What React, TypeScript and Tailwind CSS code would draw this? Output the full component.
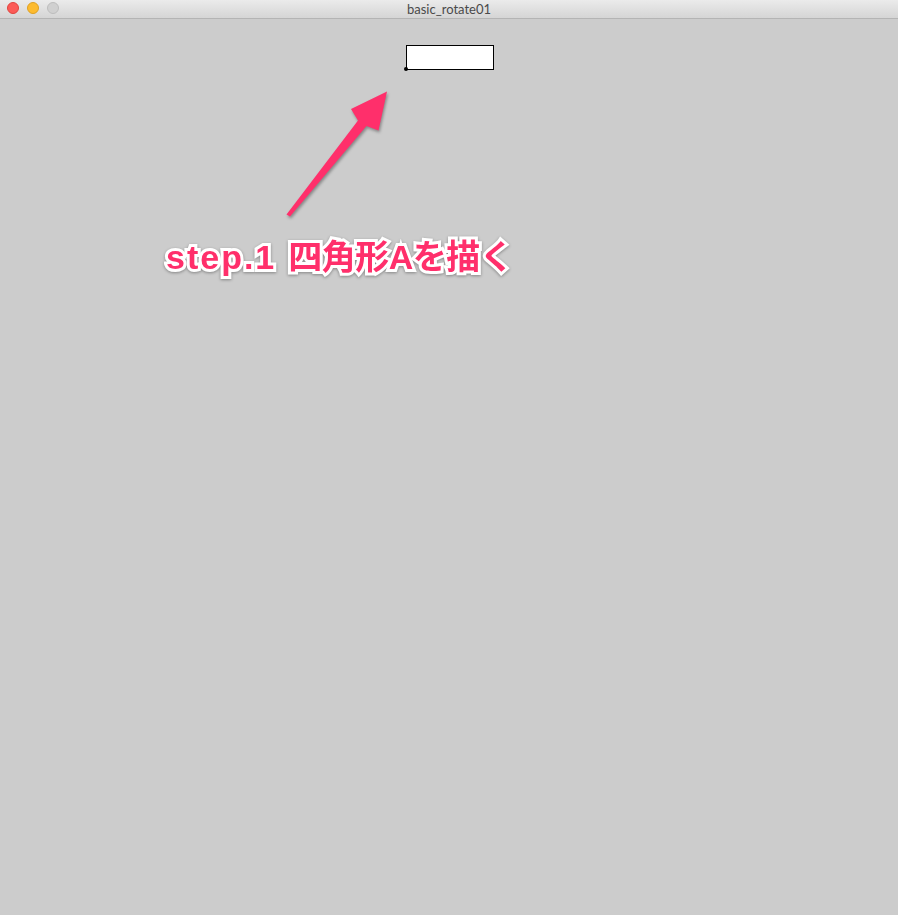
import React from "react";

const TrafficLights = () => {
  return (
    <div className="absolute left-[7px] top-[2px] flex items-center gap-[8px]">
      <span className="block h-[12px] w-[12px] rounded-full bg-[#fc5b57] border border-[#e0443e]" />
      <span className="block h-[12px] w-[12px] rounded-full bg-[#fdbb2f] border border-[#dea123]" />
      <span className="block h-[12px] w-[12px] rounded-full bg-[#d0d0d0] border border-[#bdbdbd]" />
    </div>
  );
};

const Arrow = () => {
  return (
    <svg
      className="absolute left-0 top-0 pointer-events-none [filter:drop-shadow(1px_2px_1.5px_rgba(0,0,0,0.35))]"
      width={898}
      height={915}
      viewBox="0 0 898 915"
    >
      <polygon
        points="286.5,214.5 358,120.5 351,109 387,91.5 378.5,130.5 366.5,126 290,216.5"
        fill="#ff2f6b"
        strokeLinejoin="round"
      />
    </svg>
  );
};

export default function App() {
  return (
    <div className="relative h-[915px] w-[898px] overflow-hidden bg-[#cccccc] font-['Liberation_Sans','Noto_Sans_CJK_JP',sans-serif]">
      {/* window title bar */}
      <div className="relative flex h-[19px] items-center justify-center border-b border-[#b4b4b4] bg-gradient-to-b from-[#ebebeb] to-[#d5d5d5]">
        <TrafficLights />
        <span className="text-[13px] leading-none text-[#4a4a4a] font-['Lato','Liberation_Sans',sans-serif]">
          basic_rotate01
        </span>
      </div>

      {/* rectangle A */}
      <div className="absolute left-[406px] top-[45px] h-[25px] w-[88px] border border-black bg-white" />
      <div className="absolute left-[404px] top-[67px] h-[4px] w-[4px] rounded-full bg-black" />

      <Arrow />

      <div className="absolute left-[166px] top-[240px] flex items-baseline whitespace-nowrap text-[34px] font-bold leading-none text-[#ff2f6b] [-webkit-text-stroke:6px_white] [paint-order:stroke_fill] [filter:drop-shadow(0px_1px_1.5px_rgba(0,0,0,0.35))]">
        <span className="tracking-[2px]">step.1</span>
        <span className="ml-[12px] tracking-[-0.5px]">四角形Aを描く</span>
      </div>
    </div>
  );
}
